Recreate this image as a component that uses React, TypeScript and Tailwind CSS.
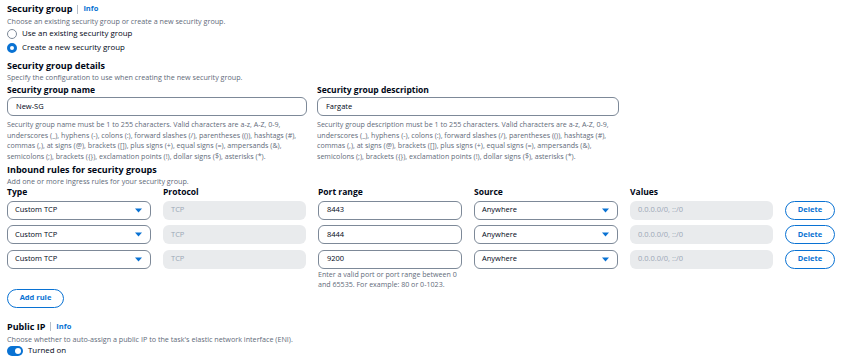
import React from 'react';

const font = { fontFamily: '"Open Sans", "Noto Sans", Arial, sans-serif' };

function Caret() {
    return (
        <svg width="7" height="5" viewBox="0 0 7 5" className="shrink-0">
            <path d="M0 0.5 L7 0.5 L3.5 4.5 Z" fill="#0972d3" />
        </svg>
    );
}

function Select({ value }: { value: string }) {
    return (
        <div className="h-[19px] w-full rounded-[6px] border border-[#7d8998] bg-white flex items-center justify-between pl-[7px] pr-[8px]">
            <span className="text-[7.5px] text-[#000716]">{value}</span>
            <Caret />
        </div>
    );
}

function Input({ value, disabled }: { value: string; disabled?: boolean }) {
    return disabled ? (
        <div className="h-[19px] w-full rounded-[6px] bg-[#e9ebed] flex items-center pl-[8px]">
            <span className="text-[7.5px] text-[#9ba7b6]">{value}</span>
        </div>
    ) : (
        <div className="h-[19px] w-full rounded-[6px] border border-[#7d8998] bg-white flex items-center pl-[8px]">
            <span className="text-[7.5px] text-[#000716]">{value}</span>
        </div>
    );
}

function Radio({ checked, label }: { checked?: boolean; label: string }) {
    return (
        <div className="flex items-center gap-[5px] h-[14px]">
            {checked ? (
                <span className="w-[10px] h-[10px] rounded-full border-[3px] border-[#0972d3] bg-white" />
            ) : (
                <span className="w-[10px] h-[10px] rounded-full border-[1.5px] border-[#7d8998] bg-white" />
            )}
            <span className="text-[7.9px] text-[#000716]">{label}</span>
        </div>
    );
}

function Heading({ title, info }: { title: string; info?: boolean }) {
    return (
        <div className="flex items-center h-[12px]">
            <span className="text-[9px] font-bold text-[#000716]">{title}</span>
            {info && (
                <>
                    <span className="mx-[5px] h-[9px] w-px bg-[#b6bec9]" />
                    <span className="text-[7.5px] font-bold text-[#0972d3]">Info</span>
                </>
            )}
        </div>
    );
}

const Desc = ({ children }: { children: React.ReactNode }) => (
    <div className="text-[7.2px] leading-[10px] text-[#5f6b7a]">{children}</div>
);

const nameHint =
    'Security group name must be 1 to 255 characters. Valid characters are a-z, A-Z, 0-9, underscores (_), hyphens (-), colons (:), forward slashes (/), parentheses (()), hashtags (#), commas (,), at signs (@), brackets ([]), plus signs (+), equal signs (=), ampersands (&), semicolons (;), brackets ({}), exclamation points (!), dollar signs ($), asterisks (*).';
const descHint =
    'Security group description must be 1 to 255 characters. Valid characters are a-z, A-Z, 0-9, underscores (_), hyphens (-), colons (:), forward slashes (/), parentheses (()), hashtags (#), commas (,), at signs (@), brackets ([]), plus signs (+), equal signs (=), ampersands (&), semicolons (;), brackets ({}), exclamation points (!), dollar signs ($), asterisks (*).';

const rules = ['8443', '8444', '9200'];
const cols = 'grid grid-cols-[144px_143px_144px_144px_143px_50px] gap-x-[12px]';

export default function App() {
    return (
        <div className="w-[854px] h-[362px] bg-white overflow-hidden pl-[7px] pt-[3px]" style={font}>
            {/* Security group */}
            <Heading title="Security group" info />
            <div className="mt-[1px]">
                <Desc>Choose an existing security group or create a new security group.</Desc>
            </div>
            <div className="mt-[1px]">
                <Radio label="Use an existing security group" />
                <Radio checked label="Create a new security group" />
            </div>

            {/* Details */}
            <div className="mt-[5px]">
                <Heading title="Security group details" />
            </div>
            <Desc>Specify the configuration to use when creating the new security group.</Desc>

            <div className="mt-[2px] flex gap-[10px]">
                <div className="w-[300px] flex flex-col">
                    <span className="text-[8.5px] font-bold text-[#000716] h-[12px] leading-[12px]">Security group name</span>
                    <div className="mt-[1px]">
                        <Input value="New-SG" />
                    </div>
                    <div className="mt-[3px] w-[292px] text-[7.1px] leading-[10.5px] text-[#5f6b7a]">{nameHint}</div>
                </div>
                <div className="w-[302px] flex flex-col">
                    <span className="text-[8.5px] font-bold text-[#000716] h-[12px] leading-[12px]">Security group description</span>
                    <div className="mt-[1px]">
                        <Input value="Fargate" />
                    </div>
                    <div className="mt-[3px] w-[302px] text-[7.1px] leading-[10.5px] text-[#5f6b7a]">{descHint}</div>
                </div>
            </div>

            {/* Inbound rules */}
            <div className="mt-[3px]">
                <Heading title="Inbound rules for security groups" />
            </div>
            <Desc>Add one or more ingress rules for your security group.</Desc>

            <div className={`${cols} mt-[1px]`}>
                {['Type', 'Protocol', 'Port range', 'Source', 'Values'].map((h) => (
                    <span key={h} className="text-[8.5px] font-bold text-[#000716] h-[10px] leading-[10px]">
                        {h}
                    </span>
                ))}
            </div>
            <div className={`${cols} mt-[3.5px] gap-y-[5.5px] items-center`}>
                {rules.map((port) => (
                    <React.Fragment key={port}>
                        <Select value="Custom TCP" />
                        <Input value="TCP" disabled />
                        <Input value={port} />
                        <Select value="Anywhere" />
                        <Input value="0.0.0.0/0, ::/0" disabled />
                        <button className="h-[19px] w-[50px] rounded-full border border-[#0972d3] text-[7.5px] font-bold text-[#0972d3] bg-white">
                            Delete
                        </button>
                    </React.Fragment>
                ))}
            </div>
            <div className="ml-[311px] w-[150px] text-[7.1px] leading-[10.5px] text-[#5f6b7a]">
                Enter a valid port or port range between 0 and 65535. For example: 80 or 0-1023.
            </div>

            <button className="block mt-[-1px] h-[19px] w-[57px] rounded-full border border-[#0972d3] text-[7.5px] font-bold text-[#0972d3] bg-white">
                Add rule
            </button>

            {/* Public IP */}
            <div className="mt-[13px]">
                <Heading title="Public IP" info />
            </div>
            <div className="mt-[1px]">
                <Desc>Choose whether to auto-assign a public IP to the task's elastic network interface (ENI).</Desc>
            </div>
            <div className="flex items-center gap-[5px] h-[12px] mt-[1px]">
                <span className="w-[16px] h-[10px] rounded-full bg-[#0972d3] flex items-center justify-end pr-[2px]">
                    <span className="w-[6px] h-[6px] rounded-full bg-white" />
                </span>
                <span className="text-[7.9px] text-[#000716]">Turned on</span>
            </div>
        </div>
    );
}
